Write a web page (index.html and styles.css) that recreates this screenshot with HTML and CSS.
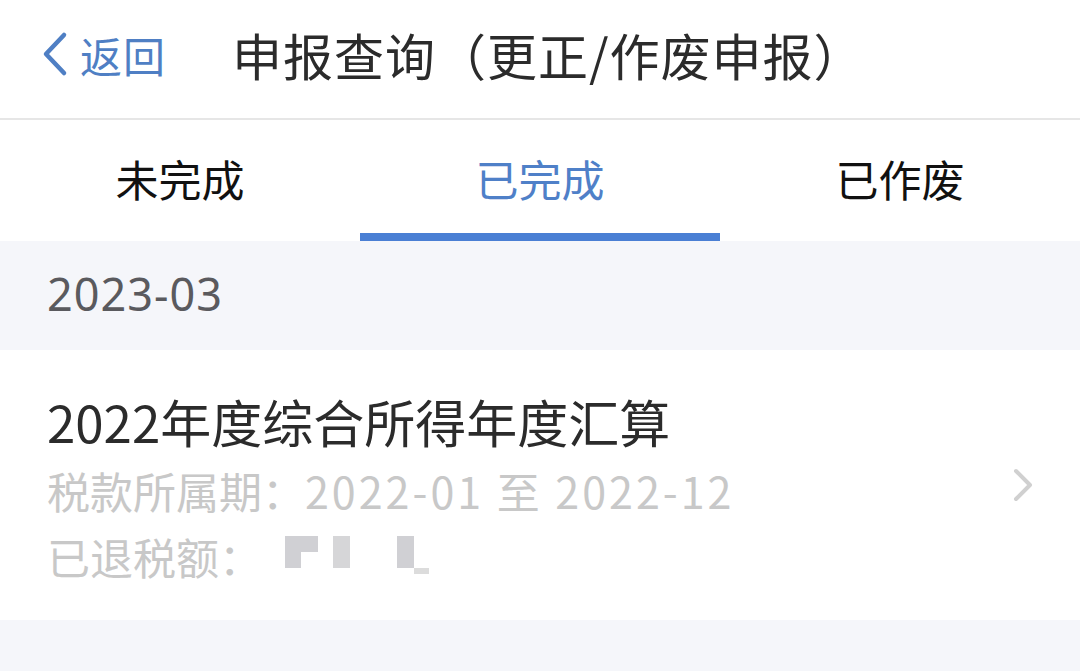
FILE: index.html
```html
<!DOCTYPE html>
<html lang="zh-CN">
<head>
  <meta charset="UTF-8">
  <meta name="viewport" content="width=device-width, initial-scale=1.0">
  <title>申报查询</title>
  <link rel="stylesheet" href="styles.css">
</head>
<body>
  <div class="header">
    <div class="back">
      <svg class="back-icon" width="30" height="46" viewBox="0 0 30 46">
        <path d="M24 4 L6 23 L24 42" fill="none" stroke="#4f7fc4" stroke-width="4.5" stroke-linecap="round" stroke-linejoin="round"/>
      </svg>
      <span>返回</span>
    </div>
    <h1 class="title">申报查询（更正/作废申报）</h1>
  </div>

  <div class="tabs">
    <div class="tab">未完成</div>
    <div class="tab active">已完成</div>
    <div class="tab">已作废</div>
  </div>

  <div class="month">2023-03</div>

  <div class="record">
    <div class="record-body">
      <div class="record-title">2022年度综合所得年度汇算</div>
      <div class="record-line">税款所属期：<span class="num">2022-01 至 2022-12</span></div>
      <div class="record-line">已退税额：
        <span class="mask">
          <i class="m1"></i><i class="m2"></i><i class="m3"></i><i class="m4"></i><i class="m5"></i>
        </span>
      </div>
    </div>
    <svg class="arrow" width="22" height="34" viewBox="0 0 22 34">
      <path d="M4 3 L18 17 L4 31" fill="none" stroke="#d0d0d0" stroke-width="4" stroke-linecap="round" stroke-linejoin="round"/>
    </svg>
  </div>

  <div class="footer-gap"></div>
</body>
</html>
```

FILE: styles.css
```css
body {
  margin: 0;
  width: 1080px;
  height: 671px;
  overflow: hidden;
  background: #f5f6fa;
  font-family: "Noto Sans CJK SC", "Noto Sans", sans-serif;
}

.header {
  height: 120px;
  display: flex;
  align-items: center;
  padding-bottom: 10px;
  box-sizing: border-box;
  background: #fff;
  border-bottom: 2px solid #e6e6e6;
}
.back {
  display: flex;
  align-items: center;
  margin-left: 40px;
  color: #4f7fc4;
  font-size: 42px;
  letter-spacing: 1px;
}
.back-icon {
  margin-right: 10px;
}
.title {
  margin: 0 0 0 66px;
  font-size: 50px;
  font-weight: normal;
  letter-spacing: 1px;
  color: #2b2b2b;
}

.tabs {
  display: flex;
  height: 121px;
  background: #fff;
}
.tab {
  flex: 1;
  display: flex;
  align-items: center;
  justify-content: center;
  padding-top: 2px;
  font-size: 43px;
  color: #111;
  border-bottom: 8px solid transparent;
}
.tab.active {
  color: #4f80c8;
  border-bottom-color: #4a7fd4;
}

.month {
  height: 109px;
  display: flex;
  align-items: center;
  padding-left: 47px;
  padding-bottom: 4px;
  box-sizing: border-box;
  font-family: "Noto Sans", sans-serif;
  font-size: 45px;
  letter-spacing: 1px;
  color: #5a5a5e;
}

.record {
  height: 270px;
  display: flex;
  align-items: center;
  background: #fff;
  padding: 0 46px 0 47px;
  box-sizing: border-box;
}
.record-body {
  flex: 1;
  padding-top: 4px;
}
.record-title {
  font-size: 51px;
  color: #2b2b2b;
  line-height: 72px;
}
.record-line {
  font-size: 43px;
  color: #c8c8c8;
  line-height: 66px;
  display: flex;
  align-items: center;
}
.num {
  letter-spacing: 3px;
}
.mask {
  position: relative;
  display: inline-block;
  width: 150px;
  height: 40px;
  margin-left: 23px;
}
.mask i {
  position: absolute;
  background: #d0d0d4;
}
.mask .m1 { left: 0; top: 0; width: 33px; height: 16px; }
.mask .m2 { left: 0; top: 16px; width: 16px; height: 16px; }
.mask .m3 { left: 48px; top: 0; width: 17px; height: 32px; background: #d6d6d8; }
.mask .m4 { left: 112px; top: 0; width: 17px; height: 32px; }
.mask .m5 { left: 129px; top: 32px; width: 15px; height: 6px; background: #dcdcdc; }

.footer-gap {
  height: 49px;
}
```
